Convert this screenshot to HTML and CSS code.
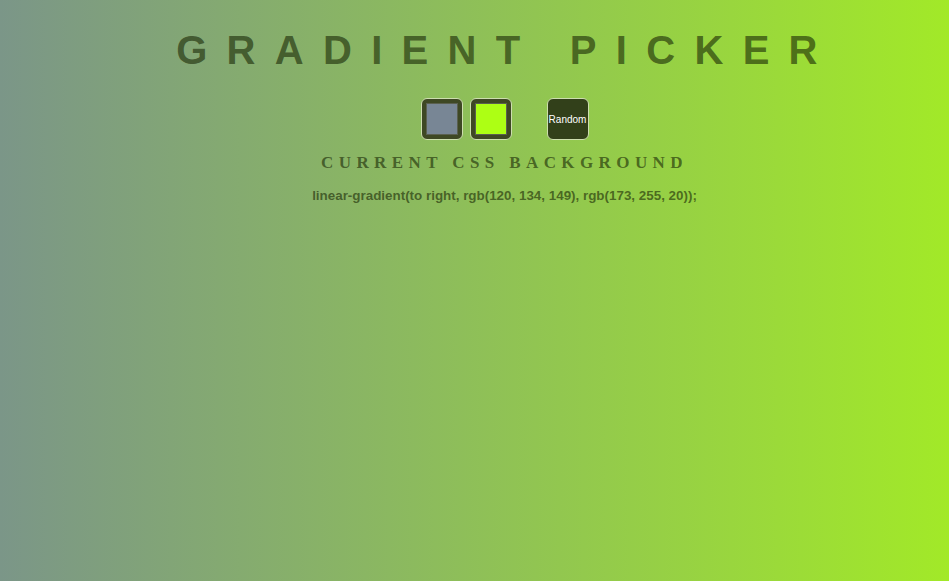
FILE: index.html
```html
<!DOCTYPE html>
<html>
<head>
<meta charset="utf-8">
<link rel="stylesheet" href="styles.css">
</head>
<body>
<main class="page">
  <h1 class="title">GRADIENT PICKER</h1>
  <div class="controls">
    <div class="swatch"><span class="swatch-fill swatch-a"></span></div>
    <div class="swatch"><span class="swatch-fill swatch-b"></span></div>
    <button class="random">Random</button>
  </div>
  <h3 class="subtitle">CURRENT CSS BACKGROUND</h3>
  <p class="code">linear-gradient(to right, rgb(120, 134, 149), rgb(173, 255, 20));</p>
</main>
</body>
</html>
```

FILE: styles.css
```css
html, body {
  margin: 0;
  height: 100%;
}
body {
  background: linear-gradient(to right, rgb(123, 150, 136), rgb(162, 233, 40));
  font-family: "Liberation Sans", Arial, sans-serif;
}
.page {
  display: flex;
  flex-direction: column;
  align-items: center;
  padding-left: 60px;
  padding-top: 27px;
}
.title {
  margin: 0 -4px 0 0;
  font-size: 40px;
  line-height: 46px;
  font-weight: bold;
  letter-spacing: 19.3px;
  color: rgba(25, 40, 5, 0.62);
}
.controls {
  display: flex;
  margin-top: 25px;
  gap: 7px;
}
.swatch {
  width: 42px;
  height: 42px;
  box-sizing: border-box;
  border: 1px solid rgb(205, 222, 175);
  border-radius: 6px;
  background: rgb(62, 72, 36);
  display: flex;
  align-items: center;
  justify-content: center;
}
.swatch-fill {
  width: 32px;
  height: 32px;
  box-sizing: border-box;
  border: 1px solid rgb(90, 96, 80);
}
.swatch-a { background: rgb(120, 134, 149); }
.swatch-b { background: rgb(173, 255, 20); }
.random {
  margin-left: 28px;
  width: 42px;
  height: 42px;
  padding: 0;
  box-sizing: border-box;
  border: 1px solid rgb(205, 222, 175);
  border-radius: 6px;
  background: rgb(50, 64, 26);
  color: #ffffff;
  font-family: "Liberation Sans", Arial, sans-serif;
  font-size: 10px;
}
.subtitle {
  margin: 13px 0 0;
  font-family: "Liberation Serif", "Times New Roman", serif;
  font-size: 17px;
  line-height: 20px;
  font-weight: bold;
  letter-spacing: 5.4px;
  color: rgba(25, 40, 5, 0.62);
}
.code {
  margin: 15px 0 0;
  font-size: 13.4px;
  line-height: 15px;
  font-weight: bold;
  color: rgba(25, 40, 5, 0.62);
}
```
